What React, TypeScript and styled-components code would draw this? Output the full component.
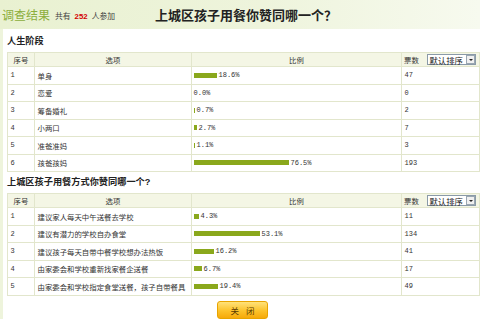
import styled, { createGlobalStyle } from "styled-components";

const GlobalStyle = createGlobalStyle`
  html, body {
    margin: 0;
    padding: 0;
    background: #eef4dc;
  }
  body {
    font-family: "Liberation Sans", "Noto Sans CJK SC", sans-serif;
    color: #333;
  }
`;

const CJK = `"Liberation Sans", "Noto Sans CJK SC", sans-serif`;
const MONO = `"Liberation Mono", "Noto Sans CJK SC", monospace`;

const Page = styled.div`
  width: 480px;
  height: 319px;
  overflow: hidden;
  display: flex;
  flex-direction: column;
`;

const Header = styled.div`
  height: 29px;
  display: flex;
  align-items: center;
  padding-left: 2px;
  background: linear-gradient(90deg, #e9f1d1 0%, #eef4dc 55%, #f7faef 100%);
`;

const Brand = styled.span`
  font-family: ${CJK};
  font-size: 12px;
  color: #8cae3c;
`;

const Count = styled.span`
  font-family: ${CJK};
  font-size: 7.8px;
  color: #444;
  margin-left: 5px;
  margin-top: 2px;
  b {
    color: #d40000;
    font-family: "Liberation Sans", sans-serif;
    margin: 0 4px;
  }
`;

const Title = styled.h1`
  margin: 0 0 0 40px;
  font-family: ${CJK};
  font-size: 13px;
  font-weight: bold;
  color: #222;
`;

const Panel = styled.div`
  flex: 1;
  margin-left: 3px;
  background: #fff;
  padding: 2px 2px 0 4px;
  display: flex;
  flex-direction: column;
`;

const SectionTitle = styled.h2`
  margin: 0;
  height: 21px;
  line-height: 21px;
  font-family: ${CJK};
  font-size: 9.2px;
  font-weight: bold;
  color: #222;
`;

const Table = styled.div`
  width: 471px;
  border: 1px solid #e2e6cc;
  border-bottom: none;
`;

const Row = styled.div<{ $head?: boolean }>`
  display: grid;
  grid-template-columns: 26px 157px 210px 1fr;
  height: ${(p) => (p.$head ? "14px" : "17.5px")};
  background: ${(p) => (p.$head ? "#f4f6e5" : "#fff")};
  border-bottom: 1px solid #e2e6cc;
  box-sizing: border-box;
`;

const Cell = styled.div<{ $center?: boolean; $pad?: number }>`
  display: flex;
  align-items: center;
  justify-content: ${(p) => (p.$center ? "center" : "flex-start")};
  padding-left: ${(p) => (p.$center ? 0 : p.$pad ?? 2.5)}px;
  font-family: ${CJK};
  font-size: 7.4px;
  color: #333;
  white-space: nowrap;
  & + & {
    border-left: 1px solid #e2e6cc;
  }
`;

const Num = styled.span`
  font-family: ${MONO};
  font-size: 7px;
  color: #333;
`;

const Bar = styled.span`
  display: inline-block;
  height: 5px;
  background: #8aa81c;
  margin-right: 2px;
`;

const VoteHead = styled(Cell)`
  justify-content: space-between;
  padding: 0 3px 0 2px;
`;

const Select = styled.div`
  display: flex;
  align-items: center;
  height: 11px;
  border: 1px solid #8a9aa8;
  background: #fff;
  font-family: ${CJK};
  font-size: 8.4px;
  color: #222;
  padding-left: 2px;
  gap: 3px;
  box-sizing: border-box;
`;

const Arrow = styled.span`
  width: 9px;
  height: 9px;
  border: 1px solid #9aa7b2;
  background: #f0f0f0;
  box-sizing: border-box;
  display: flex;
  align-items: center;
  justify-content: center;
  &::after {
    content: "";
    border-left: 2px solid transparent;
    border-right: 2px solid transparent;
    border-top: 2px solid #222;
  }
`;

const Footer = styled.div`
  width: 471px;
  display: flex;
  justify-content: center;
  padding-top: 5px;
`;

const CloseButton = styled.button`
  width: 51px;
  height: 18px;
  border: 1px solid #e8a400;
  border-radius: 3px;
  background: linear-gradient(#ffe27a, #fcc22a 55%, #f6a90a);
  font-family: ${CJK};
  font-size: 8.5px;
  color: #5a3a00;
  letter-spacing: 7px;
  padding: 0 0 0 7px;
  cursor: pointer;
`;

type Item = { label: string; pct: number; votes: number };

const stage: Item[] = [
  { label: "单身", pct: 18.6, votes: 47 },
  { label: "恋爱", pct: 0.0, votes: 0 },
  { label: "筹备婚礼", pct: 0.7, votes: 2 },
  { label: "小两口", pct: 2.7, votes: 7 },
  { label: "准爸准妈", pct: 1.1, votes: 3 },
  { label: "孩爸孩妈", pct: 76.5, votes: 193 },
];

const ways: Item[] = [
  { label: "建议家人每天中午送餐去学校", pct: 4.3, votes: 11 },
  { label: "建议有潜力的学校自办食堂", pct: 53.1, votes: 134 },
  { label: "建议孩子每天自带中餐学校想办法热饭", pct: 16.2, votes: 41 },
  { label: "由家委会和学校重新找家餐企送餐", pct: 6.7, votes: 17 },
  { label: "由家委会和学校指定食堂送餐，孩子自带餐具", pct: 19.4, votes: 49 },
];

const ResultTable = ({ items }: { items: Item[] }) => (
  <Table>
    <Row $head>
      <Cell $center>序号</Cell>
      <Cell $center>选项</Cell>
      <Cell $center>比例</Cell>
      <VoteHead>
        <span>票数</span>
        <Select>
          默认排序
          <Arrow />
        </Select>
      </VoteHead>
    </Row>
    {items.map((it, i) => (
      <Row key={it.label}>
        <Cell>
          <Num>{i + 1}</Num>
        </Cell>
        <Cell>{it.label}</Cell>
        <Cell $pad={1.5}>
          {it.pct > 0 && (
            <Bar style={{ width: Math.max(1, Math.round(it.pct * 1.24)) }} />
          )}
          <Num>{it.pct.toFixed(1)}%</Num>
        </Cell>
        <Cell>
          <Num>{it.votes}</Num>
        </Cell>
      </Row>
    ))}
  </Table>
);

const SurveyResult = () => (
  <Page>
    <GlobalStyle />
    <Header>
      <Brand>调查结果</Brand>
      <Count>
        共有<b>252</b>人参加
      </Count>
      <Title>上城区孩子用餐你赞同哪一个？</Title>
    </Header>
    <Panel>
      <SectionTitle>人生阶段</SectionTitle>
      <ResultTable items={stage} />
      <SectionTitle>上城区孩子用餐方式你赞同哪一个?</SectionTitle>
      <ResultTable items={ways} />
      <Footer>
        <CloseButton>关闭</CloseButton>
      </Footer>
    </Panel>
  </Page>
);

export default SurveyResult;
